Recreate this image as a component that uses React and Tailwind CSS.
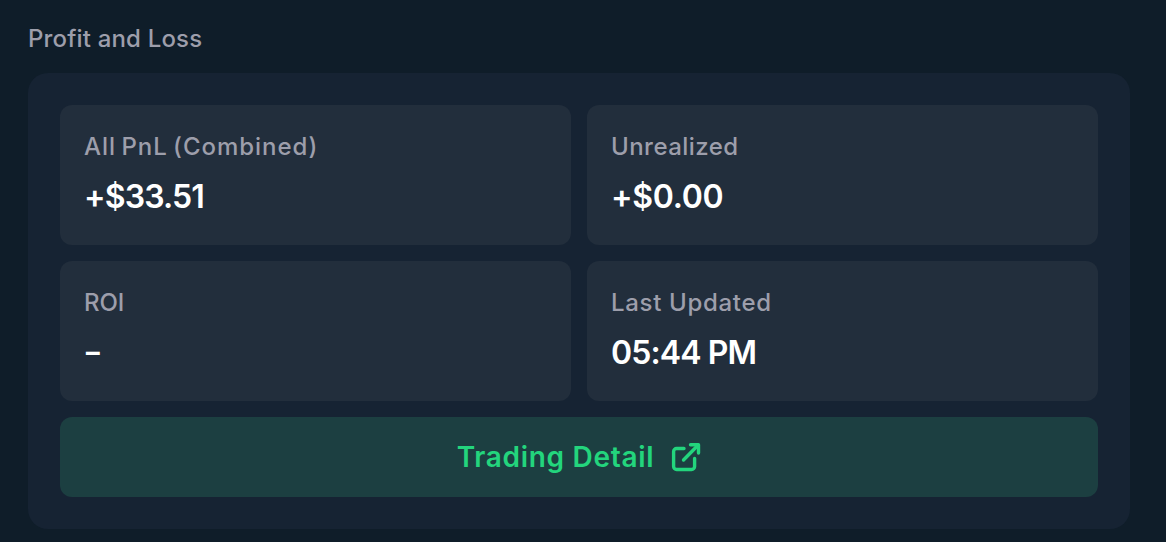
import React from 'react';

const stats = [
  { label: 'All PnL (Combined)', value: '+$33.51', labelClass: 'tracking-[0.97px] [word-spacing:-2px]', valueClass: 'tracking-[-0.85px]' },
  { label: 'Unrealized', value: '+$0.00', labelClass: 'tracking-[0.45px]', valueClass: 'tracking-[-0.3px]' },
  { label: 'ROI', value: '-', labelClass: 'tracking-[-0.1px]', valueClass: 'inline-block origin-left scale-x-[1.32] -translate-x-px -translate-y-px' },
  { label: 'Last Updated', value: '05:44 PM', labelClass: 'tracking-[0.67px]', valueClass: 'tracking-[-0.9px]' },
];

const ExternalLinkIcon = () => (
  <svg
    className="w-[30px] h-[30px] shrink-0"
    viewBox="0 0 30 30"
    fill="none"
    stroke="currentColor"
    strokeWidth="3.4"
    strokeLinecap="round"
    strokeLinejoin="round"
  >
    <path d="M13 6.5H5.6a3 3 0 0 0-3 3v15a3 3 0 0 0 3 3h15a3 3 0 0 0 3-3v-8" />
    <path d="M19.5 2.7h8V11" />
    <path d="M27 3.2L12.5 18" />
  </svg>
);

const StatCard = ({ label, value, labelClass, valueClass }) => (
  <div className="h-[140px] rounded-xl bg-[#222e3c] px-6 pt-6">
    <p className="h-9 flex items-center">
      <span className={`text-2xl font-medium whitespace-nowrap text-[#9d9eab] ${labelClass}`}>{label}</span>
    </p>
    <p className="mt-[7px] h-[50px] flex items-center">
      <span className={`text-[32px] font-semibold whitespace-nowrap text-white ${valueClass}`}>{value}</span>
    </p>
  </div>
);

const App = () => {
  return (
    <div className="h-[542px] overflow-hidden bg-[#0f1d29] pl-7 pr-9 pt-[21px] font-['Inter',sans-serif]">
      <h2 className="h-9 mb-4 flex items-center text-2xl font-medium text-[#9d9eab]">
        <span className="tracking-[0.17px]">Profit and Loss</span>
      </h2>

      <div className="h-[456px] rounded-[20px] bg-[#162333] p-8">
        <div className="grid grid-cols-2 gap-4">
          {stats.map((stat) => (
            <StatCard key={stat.label} {...stat} />
          ))}
        </div>

        <button className="mt-4 h-20 w-full rounded-xl bg-[#1c3f41] text-[#23d57d] flex items-center justify-center gap-[17px]">
          <span className="text-[28px] font-semibold tracking-[0.7px]">Trading Detail</span>
          <ExternalLinkIcon />
        </button>
      </div>
    </div>
  );
};

export default App;
